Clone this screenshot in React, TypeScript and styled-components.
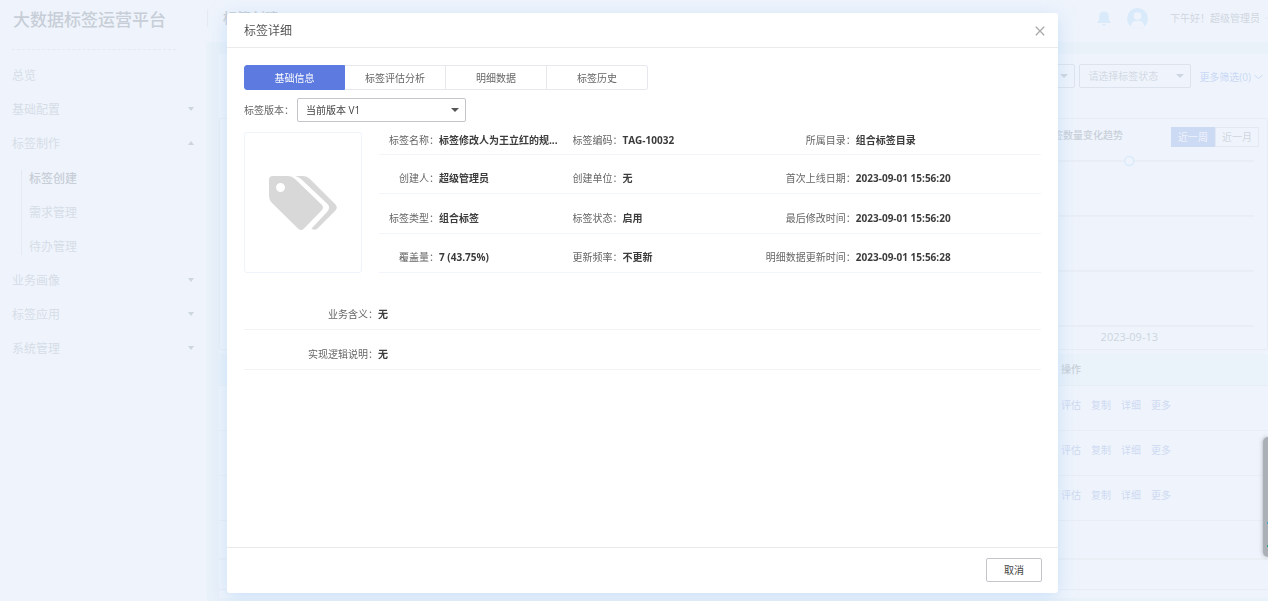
import React from 'react';
import styled, { createGlobalStyle, css } from 'styled-components';

const Global = createGlobalStyle`
  * { box-sizing: border-box; }
  html, body, #root { margin: 0; padding: 0; }
  body {
    font-family: "Open Sans", "Noto Sans CJK SC", sans-serif;
    font-size: 10px;
    line-height: 16px;
    color: #666;
    background: #eff4fc;
    overflow: hidden;
  }
  button, select { font: inherit; color: inherit; }
  button { cursor: pointer; }
  a { text-decoration: none; color: inherit; }
`;

/* ---------- page behind the dialog ---------- */

const Page = styled.div`
  display: flex;
  min-height: 100vh;
`;

const Sidebar = styled.aside`
  flex: 0 0 207px;
  padding: 0 13px 0 12px;
  color: #d6dde7;
  font-size: 12px;
`;

const Logo = styled.h1`
  margin: 0 18px 9px 0;
  height: 50px;
  padding-left: 1px;
  font-size: 17px;
  line-height: 40px;
  font-weight: 500;
  color: #c7ced7;
  white-space: nowrap;
  border-bottom: 1px dashed #e5eaf2;
`;

const Caret = styled.i<{ $up?: boolean; $color?: string }>`
  width: 0;
  height: 0;
  border: 4px solid transparent;
  ${p =>
    p.$up
      ? css`border-top: 0; border-bottom-color: ${p.$color || '#cdd5df'};`
      : css`border-bottom: 0; border-top-color: ${p.$color || '#cdd5df'};`}
`;

const NavItem = styled.a`
  display: flex;
  align-items: center;
  justify-content: space-between;
  height: 34px;
  ${Caret} {
    margin-bottom: 2px;
    border-left-width: 3px;
    border-right-width: 3px;
  }
`;

const SubNav = styled.div`
  display: flex;
  flex-direction: column;
  gap: 18px;
  margin: 9px 0 9px 9px;
  padding: 1px 0 0 7px;
  border-left: 1px solid #e4eaf2;
`;

const SubItem = styled.a<{ $active?: boolean }>`
  line-height: 16px;
  color: ${p => (p.$active ? '#c7ced7' : '#d6dde7')};
  font-weight: ${p => (p.$active ? 500 : 400)};
`;

const Main = styled.main`
  flex: 1;
  min-width: 0;
  display: flex;
  flex-direction: column;
  background: #e9f1f9;
`;

const TopBar = styled.header`
  display: flex;
  align-items: center;
  height: 42px;
  padding: 0 0 6px;
  background: #eff4fc;
`;

const Crumb = styled.h2`
  flex: 1;
  margin: 0;
  padding-left: 15px;
  border-left: 1px solid #e6ebf3;
  font-size: 14px;
  line-height: 18px;
  font-weight: 500;
  color: #c7ced7;
`;

const UserTools = styled.div`
  display: flex;
  align-items: center;
  color: #cfd6df;
`;

const IconButton = styled.button`
  display: flex;
  padding: 0;
  margin-right: 16px;
  border: 0;
  background: none;
`;

const Greeting = styled.span`
  margin: 0 5px 0 6px;
  white-space: nowrap;
`;

const ChevronClip = styled.span`
  width: 3px;
  overflow: hidden;
  display: flex;
`;

const Content = styled.section`
  flex: 1;
  margin: 12px 0 3px 12px;
  background: #eff4fc;
`;

const Filters = styled.div`
  display: flex;
  justify-content: flex-end;
  align-items: center;
  gap: 4px;
  padding: 10px 5px 30px 0;
`;

const SelectBox = styled.span<{ $w: number; $faded?: boolean }>`
  position: relative;
  display: inline-flex;
  width: ${p => p.$w}px;
  color: ${p => (p.$faded ? '#d3dae4' : '#444')};
  ${Caret} {
    position: absolute;
    right: 7px;
    top: 10px;
    pointer-events: none;
  }
`;

const Select = styled.select<{ $faded?: boolean }>`
  appearance: none;
  width: 100%;
  height: 24px;
  padding: 0 20px 0 8px;
  border: 1px solid ${p => (p.$faded ? '#dde3ec' : '#c4c5ca')};
  border-radius: 2px;
  background: ${p => (p.$faded ? 'transparent' : '#fff')};
  outline: 0;
`;

const MoreLink = styled.a`
  display: flex;
  align-items: center;
  gap: 3px;
  margin-left: 4px;
  padding-top: 2px;
  color: #c9d8f6;
`;

const ChartCard = styled.div`
  height: 232px;
  padding: 8px 8px 0 12px;
  border: 1px solid #e8edf5;
  border-radius: 2px;
`;

const ChartHead = styled.div`
  display: flex;
  justify-content: space-between;
  align-items: flex-start;
  color: #c9d0d9;
  font-weight: 500;
`;

const ChartTitles = styled.div`
  flex: 1;
  display: grid;
  grid-template-columns: 811px 1fr;
  span:last-child { white-space: nowrap; }
`;

const Range = styled.div`
  display: flex;
  font-weight: 400;
`;

const RangeButton = styled.button<{ $on?: boolean }>`
  width: 44px;
  height: 20px;
  padding: 0;
  border: 1px solid ${p => (p.$on ? '#cddaf4' : '#e3e9f2')};
  background: ${p => (p.$on ? '#cddaf4' : 'transparent')};
  color: ${p => (p.$on ? '#eff4fc' : '#cfd6df')};
`;

const Plot = styled.svg`
  display: block;
  width: calc(100% - 5px);
  height: 196px;
  font-size: 11px;
`;

const TableWrap = styled.div`
  margin-top: 4px;
`;

const Table = styled.table`
  width: 100%;
  border-collapse: collapse;
  table-layout: fixed;
  th, td {
    height: 45px;
    padding: 0;
    text-align: left;
    border-bottom: 1px solid #e8eef5;
  }
  td { padding-bottom: 6px; }
  th {
    height: 31px;
    background: #eaf2fa;
    color: #c9d0d9;
    font-weight: 500;
  }
  th:first-child { width: 842px; }
`;

const Actions = styled.div`
  display: flex;
  gap: 10px;
  color: #cedaf2;
`;

const Pager = styled.div`
  height: 39px;
  border-bottom: 2px solid #eaeff6;
`;

const PageEnd = styled.div`
  height: 30px;
  border-bottom: 1px solid #e8eef5;
`;

const EdgeDock = styled.div`
  position: fixed;
  right: 0;
  top: 437px;
  width: 5px;
  height: 120px;
  border-radius: 6px 0 0 6px;
  background: #abb0b7;
  box-shadow: 0 0 4px rgba(90, 100, 115, 0.5);
  display: flex;
  flex-direction: column;
  align-items: flex-end;
  justify-content: flex-end;
  gap: 21px;
  padding-bottom: 10px;
`;

const DockDot = styled.i<{ $c: string }>`
  width: 1px;
  height: 2px;
  background: ${p => p.$c};
`;

/* ---------- dialog ---------- */

const Overlay = styled.div`
  position: fixed;
  inset: 0;
  display: flex;
  padding: 13px 210px 8px 227px;
`;

const Dialog = styled.div`
  flex: 1;
  min-width: 0;
  display: flex;
  flex-direction: column;
  background: #fff;
  border-radius: 3px;
  box-shadow: 0 4px 18px rgba(165, 205, 246, 0.5);
`;

const DialogHead = styled.div`
  display: flex;
  align-items: center;
  justify-content: space-between;
  height: 35px;
  padding: 2px 13px 0 17px;
  border-bottom: 1px solid #ebebed;
  h2 {
    margin: 0;
    font-size: 12px;
    font-weight: 400;
    color: #555;
  }
`;

const CloseButton = styled.button`
  display: flex;
  padding: 0;
  border: 0;
  background: none;
`;

const DialogBody = styled.div`
  flex: 1;
  padding: 17px 17px 0;
`;

const Tabs = styled.div`
  display: flex;
`;

const Tab = styled.button<{ $on?: boolean }>`
  width: 101px;
  height: 25px;
  padding: 0;
  border: 1px solid ${p => (p.$on ? '#5c7ae0' : '#e6e8ed')};
  border-left-width: ${p => (p.$on ? 1 : 0)}px;
  background: ${p => (p.$on ? '#5c7ae0' : '#fff')};
  color: ${p => (p.$on ? '#fff' : '#666')};
  &:first-child { border-radius: 3px 0 0 3px; }
  &:last-child { border-radius: 0 3px 3px 0; }
`;

const VersionRow = styled.div`
  display: flex;
  align-items: center;
  gap: 3px;
  margin: 8px 0 10px;
`;

const Summary = styled.div`
  display: flex;
  gap: 17px;
`;

const Thumb = styled.div`
  flex: 0 0 118px;
  height: 141px;
  display: flex;
  align-items: center;
  justify-content: center;
  border: 1px solid #edf4fb;
  border-radius: 3px;
`;

const Facts = styled.dl`
  flex: 1;
  min-width: 0;
  margin: 0;
  display: grid;
  grid-template-rows: 23px repeat(3, 1fr);
`;

const FactRow = styled.div`
  display: grid;
  grid-template-columns: 60px 2fr 60px 2fr 110px 3fr;
  align-items: end;
  padding-bottom: 7px;
  border-bottom: 1px solid #f2f6fb;
`;

const Label = styled.dt`
  text-align: right;
  white-space: nowrap;
`;

const Value = styled.dd`
  min-width: 0;
  margin: 0;
  overflow: hidden;
  text-overflow: ellipsis;
  white-space: nowrap;
  color: #3c3c3c;
  font-weight: 700;
`;

const Notes = styled.dl`
  margin: 17px 0 0;
`;

const NoteRow = styled.div`
  display: grid;
  grid-template-columns: 134px 1fr;
  align-items: end;
  height: 40px;
  padding-bottom: 7px;
  border-bottom: 1px solid #f2f3f4;
`;

const DialogFoot = styled.div`
  display: flex;
  justify-content: flex-end;
  align-items: center;
  height: 46px;
  padding: 0 16px 2px 0;
  border-top: 1px solid #e9e9eb;
`;

const CancelButton = styled.button`
  width: 56px;
  height: 24px;
  padding: 0;
  border: 1px solid #c4c5ca;
  border-radius: 2px;
  background: #fff;
  color: #444;
`;

const facts: [string, string][][] = [
  [['标签名称', '标签修改人为王立红的规...'], ['标签编码', 'TAG-10032'], ['所属目录', '组合标签目录']],
  [['创建人', '超级管理员'], ['创建单位', '无'], ['首次上线日期', '2023-09-01 15:56:20']],
  [['标签类型', '组合标签'], ['标签状态', '启用'], ['最后修改时间', '2023-09-01 15:56:20']],
  [['覆盖量', '7 (43.75%)'], ['更新频率', '不更新'], ['明细数据更新时间', '2023-09-01 15:56:28']],
];

const notes: [string, string][] = [['业务含义', '无'], ['实现逻辑说明', '无']];

const Chevron = () => (
  <svg width="9" height="6" viewBox="0 0 9 6" fill="none" stroke="currentColor">
    <path d="M0.5 0.8 4.5 4.8 8.5 0.8" />
  </svg>
);

const TagsIcon = () => (
  <svg width="68" height="54" viewBox="0 0 68 54" fill="#d8d8d8">
    <path
      fillRule="evenodd"
      d="M4 0H19Q23 0 26 3L52.500 28.500Q55.500 31.500 52.500 34.500L35 52.500Q32 55.500 29 52.500L3 27Q0 24 0 20V4Q0 0 4 0ZM11.500 7A4.500 4.500 0 1 0 11.500 16 4.500 4.500 0 1 0 11.500 7Z"
    />
    <path d="M26 0H34Q38 0 41 3L66.500 28.500Q69 31.500 66.500 34.500L48.500 52.500Q45.500 55 42.500 52.500L58 36Q62 31.500 58 27.500L32 3Q29 0.500 26 0Z" />
  </svg>
);

export default function App() {
  return (
    <>
      <Global />
      <Page>
        <Sidebar>
          <Logo>大数据标签运营平台</Logo>
          <nav>
            <NavItem href="#">总览</NavItem>
            <NavItem href="#">基础配置<Caret /></NavItem>
            <NavItem href="#">标签制作<Caret $up /></NavItem>
            <SubNav>
              <SubItem href="#" $active>标签创建</SubItem>
              <SubItem href="#">需求管理</SubItem>
              <SubItem href="#">待办管理</SubItem>
            </SubNav>
            <NavItem href="#">业务画像<Caret /></NavItem>
            <NavItem href="#">标签应用<Caret /></NavItem>
            <NavItem href="#">系统管理<Caret /></NavItem>
          </nav>
        </Sidebar>
        <Main>
          <TopBar>
            <Crumb>标签创建</Crumb>
            <UserTools>
              <IconButton aria-label="notifications">
                <svg width="14" height="15" viewBox="0 0 14 15" fill="#d9eafa">
                  <path d="M7 0.500C9.800 0.500 11.800 2.500 11.800 5.200V9L13.500 11V12H0.500V11L2.200 9V5.200C2.200 2.500 4.200 0.500 7 0.500ZM5.200 13H8.800Q8.500 14.600 7 14.600T5.200 13Z" />
                </svg>
              </IconButton>
              <IconButton aria-label="account">
                <svg width="21" height="21" viewBox="0 0 21 21">
                  <circle cx="10.500" cy="10.500" r="10.500" fill="#d9eafa" />
                  <circle cx="10.500" cy="8" r="3.800" fill="#eff4fc" />
                  <path d="M3.800 18.600C4 14.500 7 12.800 10.500 12.800S17 14.500 17.200 18.600Q14 21 10.500 21T3.800 18.600Z" fill="#eff4fc" />
                </svg>
              </IconButton>
              <Greeting>下午好！超级管理员</Greeting>
              <ChevronClip><Chevron /></ChevronClip>
            </UserTools>
          </TopBar>
          <Content>
            <Filters>
              <SelectBox $w={112} $faded>
                <Select $faded aria-label="标签类型"><option> </option></Select>
                <Caret />
              </SelectBox>
              <SelectBox $w={112} $faded>
                <Select $faded aria-label="标签状态"><option>请选择标签状态</option></Select>
                <Caret />
              </SelectBox>
              <MoreLink href="#">更多筛选(0)<Chevron /></MoreLink>
            </Filters>
            <ChartCard>
              <ChartHead>
                <ChartTitles><span /><span>标签数量变化趋势</span></ChartTitles>
                <Range>
                  <RangeButton $on>近一周</RangeButton>
                  <RangeButton>近一月</RangeButton>
                </Range>
              </ChartHead>
              <Plot>
                {[14, 69, 124, 179].map(y => (
                  <line key={y} x1="0" x2="100%" y1={y} y2={y} stroke="#e3e9f1" />
                ))}
                <circle cx="87.800%" cy="14" r="4.500" fill="#eff4fc" stroke="#d9eafa" strokeWidth="1.500" />
                <text x="87.800%" y="194" textAnchor="middle" fill="#ccd4de">2023-09-13</text>
              </Plot>
            </ChartCard>
            <TableWrap>
              <Table>
                <thead>
                  <tr><th /><th>操作</th></tr>
                </thead>
                <tbody>
                  {[0, 1, 2].map(i => (
                    <tr key={i}>
                      <td />
                      <td>
                        <Actions>
                          <a href="#">评估</a>
                          <a href="#">复制</a>
                          <a href="#">详细</a>
                          <a href="#">更多</a>
                        </Actions>
                      </td>
                    </tr>
                  ))}
                </tbody>
              </Table>
              <Pager />
              <PageEnd />
            </TableWrap>
          </Content>
        </Main>
      </Page>
      <EdgeDock>
        <DockDot $c="#3fa9d0" />
        <DockDot $c="#2fa67c" />
      </EdgeDock>

      <Overlay>
        <Dialog role="dialog" aria-labelledby="dialog-title">
          <DialogHead>
            <h2 id="dialog-title">标签详细</h2>
            <CloseButton aria-label="关闭">
              <svg width="10" height="10" viewBox="0 0 10 10" fill="none" stroke="#aaa" strokeWidth="1.300">
                <path d="M0.800 0.800 9.200 9.200M9.200 0.800 0.800 9.200" />
              </svg>
            </CloseButton>
          </DialogHead>
          <DialogBody>
            <Tabs role="tablist">
              <Tab role="tab" aria-selected $on>基础信息</Tab>
              <Tab role="tab">标签评估分析</Tab>
              <Tab role="tab">明细数据</Tab>
              <Tab role="tab">标签历史</Tab>
            </Tabs>
            <VersionRow>
              <label htmlFor="version">标签版本：</label>
              <SelectBox $w={169}>
                <Select id="version"><option>当前版本 V1</option></Select>
                <Caret $color="#555" />
              </SelectBox>
            </VersionRow>
            <Summary>
              <Thumb><TagsIcon /></Thumb>
              <Facts>
                {facts.map((row, i) => (
                  <FactRow key={i}>
                    {row.map(([k, v]) => (
                      <React.Fragment key={k}>
                        <Label>{k}：</Label>
                        <Value>{v}</Value>
                      </React.Fragment>
                    ))}
                  </FactRow>
                ))}
              </Facts>
            </Summary>
            <Notes>
              {notes.map(([k, v]) => (
                <NoteRow key={k}>
                  <Label>{k}：</Label>
                  <Value>{v}</Value>
                </NoteRow>
              ))}
            </Notes>
          </DialogBody>
          <DialogFoot>
            <CancelButton>取消</CancelButton>
          </DialogFoot>
        </Dialog>
      </Overlay>
    </>
  );
}
